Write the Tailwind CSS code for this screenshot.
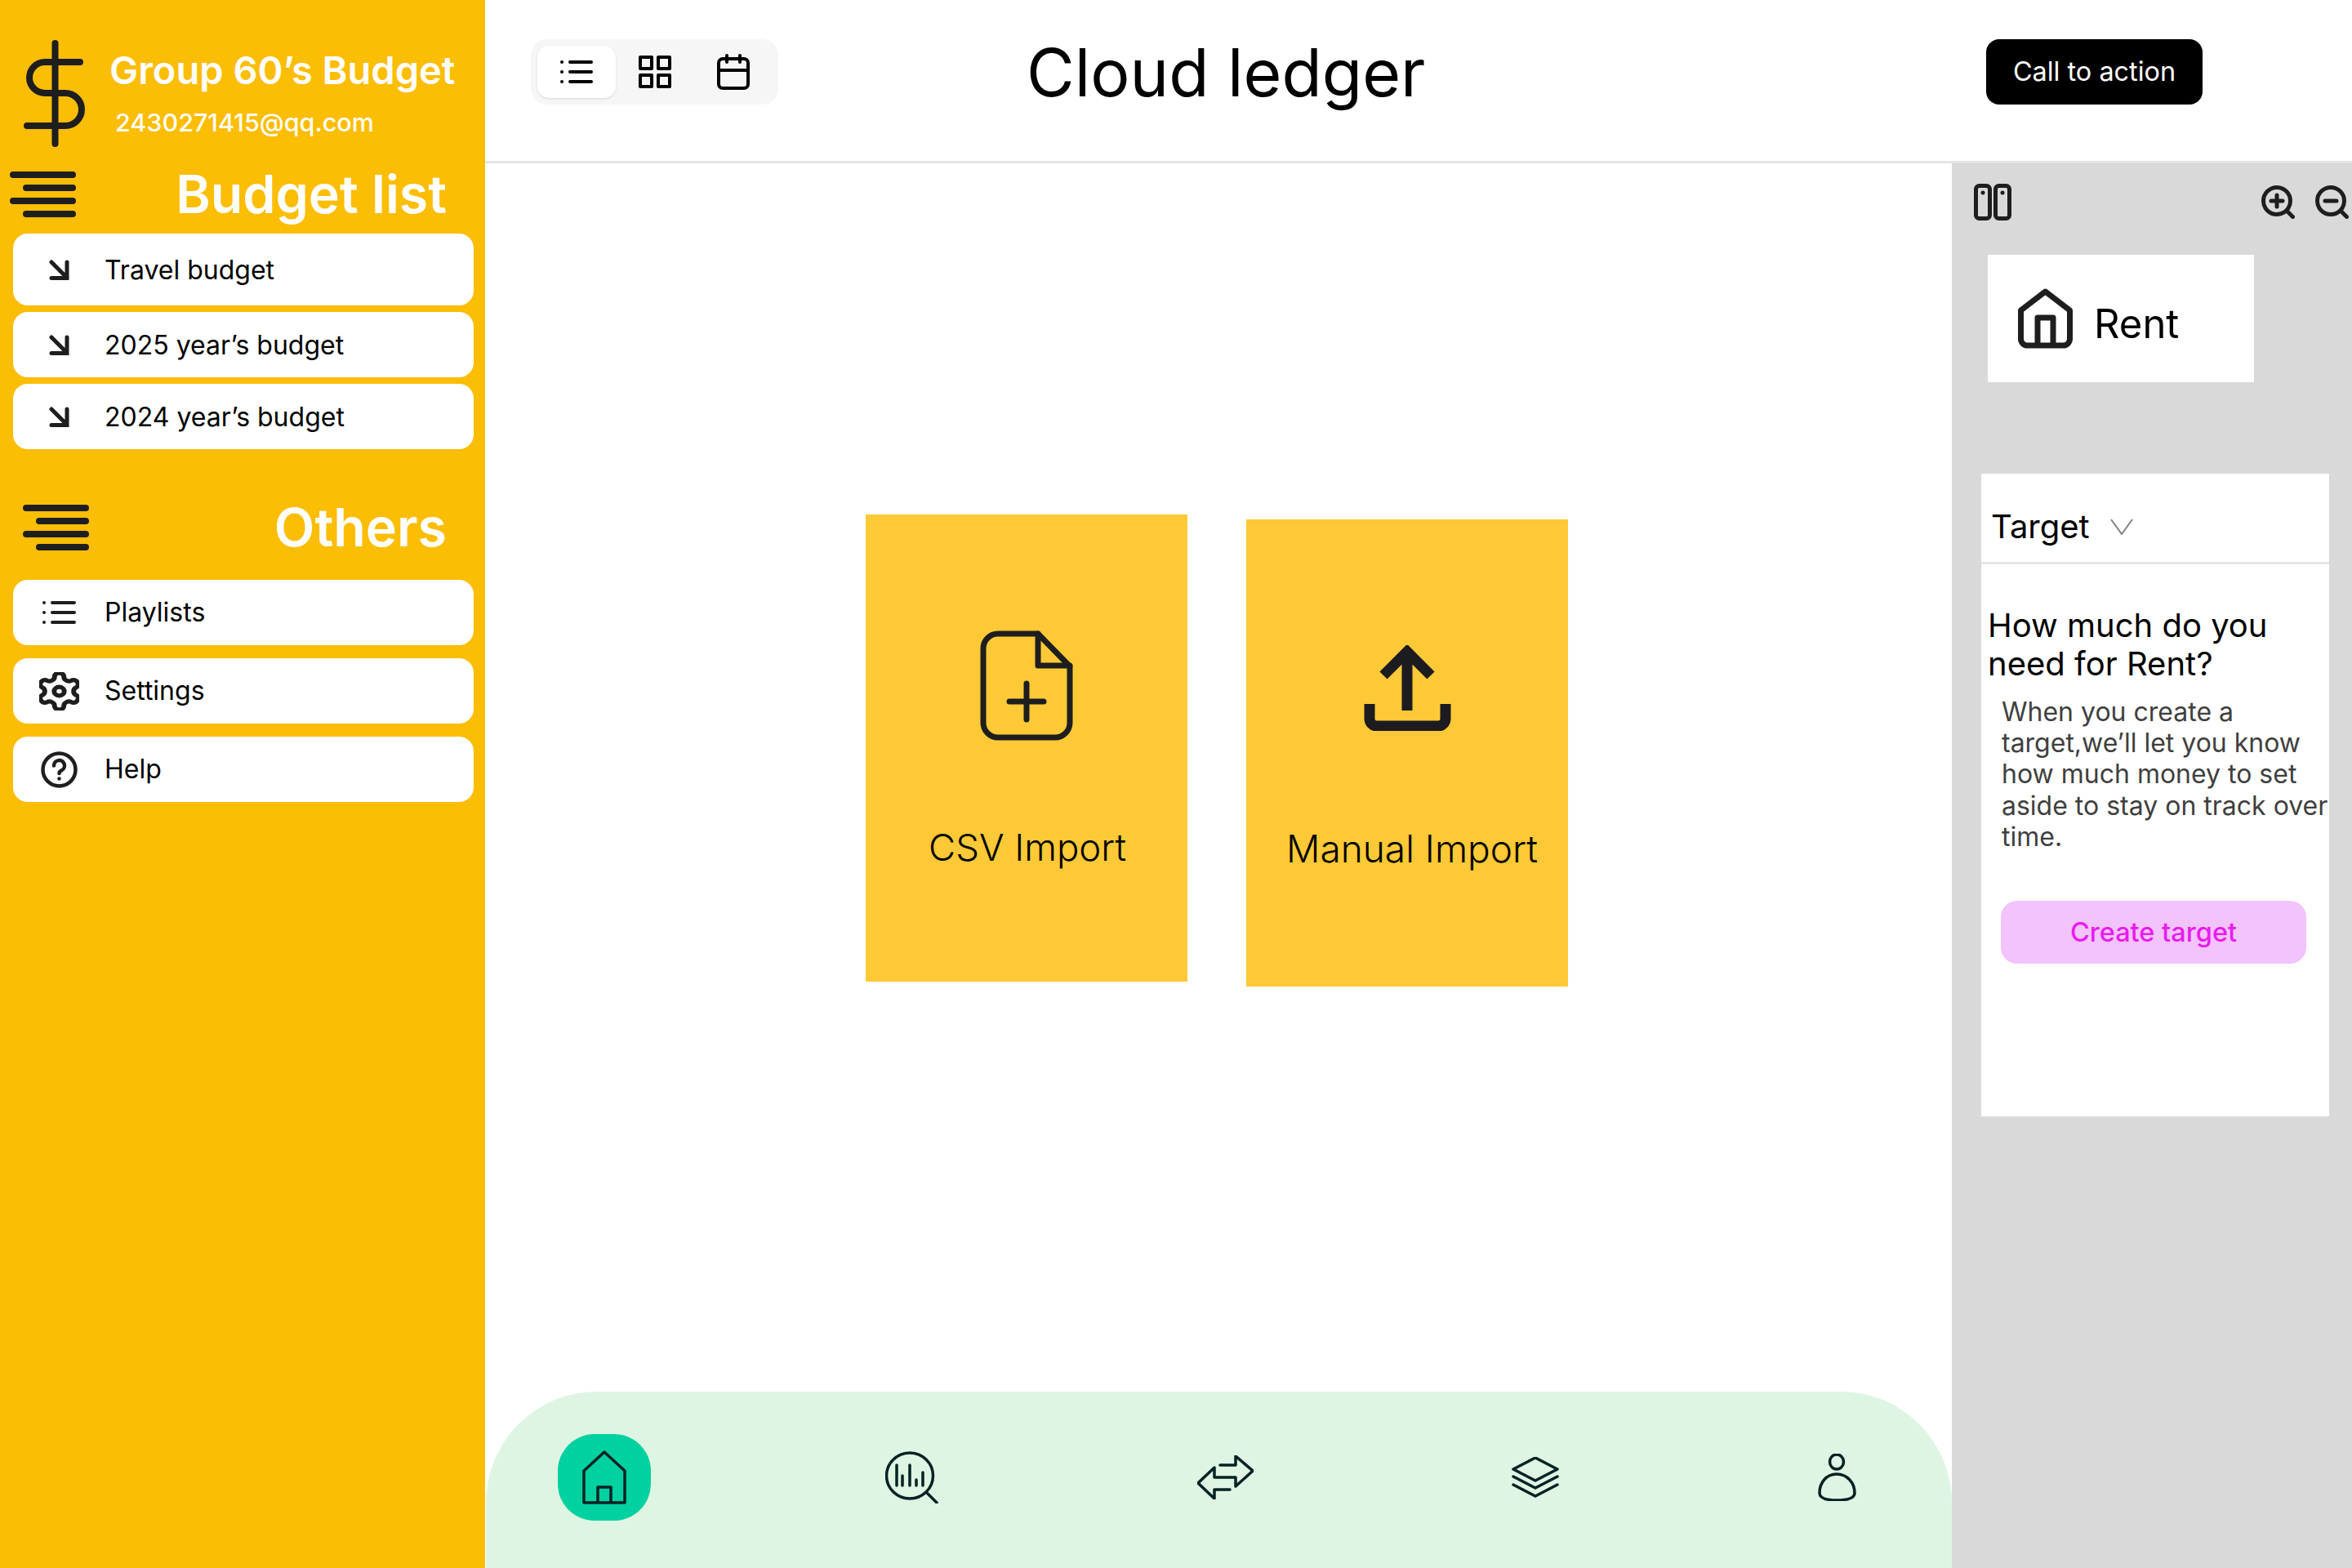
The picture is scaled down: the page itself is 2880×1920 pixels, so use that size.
<!DOCTYPE html>
<html lang="en">
<head>
  <meta charset="UTF-8" />
  <title>Cloud ledger</title>
  <script src="https://cdn.jsdelivr.net/npm/@tailwindcss/browser@4"></script>
</head>
<body class="w-[2880px] h-[1920px] overflow-hidden bg-white flex font-['Inter',sans-serif] text-black">

  <!-- Sidebar -->
  <aside class="w-[594px] h-full shrink-0 bg-[#fcbd05] flex flex-col">
    <div class="h-[197px] flex pl-[28px] pt-[49px]">
      <svg class="w-[78px] h-[131px] shrink-0" viewBox="28 49 78 131" fill="none" stroke="#1e1e1e" stroke-width="8" stroke-linecap="round"><path d="M67.5 53V176M98 76H55a19 19 0 0 0 0 38H80a20 20 0 0 1 0 40H33"/></svg>
      <div class="ml-[28px] mt-[5px]">
        <p class="text-[47px] leading-[64px] font-semibold text-white whitespace-nowrap">Group 60’s Budget</p>
        <p class="text-[30.5px] leading-[44px] font-medium text-white ml-[7px] mt-[10px]">2430271415@qq.com</p>
      </div>
    </div>

    <div class="h-[82px] flex items-center justify-between pl-[12px] pr-[47px]">
      <svg class="w-[81px] h-[56px]" viewBox="0 0 81 56" fill="none" stroke="#1e1e1e" stroke-width="8" stroke-linecap="round"><path d="M4 4H77M20 20H77M4 36H77M20 52H77"/></svg>
      <h2 class="text-[64.5px] leading-[82px] font-semibold text-white">Budget list</h2>
    </div>

    <div class="mt-[7px] ml-[16px] w-[564px] flex flex-col">
      <a class="h-[88px] pt-[1px] bg-white rounded-[18px] flex items-center text-[32px]">
        <span class="w-[112px] flex justify-center"><svg class="w-[25px] h-[25px]" viewBox="0 0 25 25" fill="none" stroke="#1e1e1e" stroke-width="5" stroke-linecap="round"><path d="M3 3L22 22M22 3V22.5H3"/></svg></span>
        Travel budget
      </a>
      <a class="h-[80px] mt-[8px] pt-[1px] bg-white rounded-[18px] flex items-center text-[32px]">
        <span class="w-[112px] flex justify-center"><svg class="w-[25px] h-[25px]" viewBox="0 0 25 25" fill="none" stroke="#1e1e1e" stroke-width="5" stroke-linecap="round"><path d="M3 3L22 22M22 3V22.5H3"/></svg></span>
        2025 year’s budget
      </a>
      <a class="h-[80px] mt-[8px] pt-[1px] bg-white rounded-[18px] flex items-center text-[32px]">
        <span class="w-[112px] flex justify-center"><svg class="w-[25px] h-[25px]" viewBox="0 0 25 25" fill="none" stroke="#1e1e1e" stroke-width="5" stroke-linecap="round"><path d="M3 3L22 22M22 3V22.5H3"/></svg></span>
        2024 year’s budget
      </a>
    </div>

    <div class="mt-[55px] h-[82px] flex items-center justify-between pl-[28px] pr-[47px]">
      <svg class="w-[81px] h-[56px]" viewBox="0 0 81 56" fill="none" stroke="#1e1e1e" stroke-width="8" stroke-linecap="round"><path d="M4 4H77M20 20H77M4 36H77M20 52H77"/></svg>
      <h2 class="text-[64.5px] leading-[82px] font-semibold text-white">Others</h2>
    </div>

    <div class="mt-[23px] ml-[16px] w-[564px] flex flex-col gap-[16px]">
      <a class="h-[80px] bg-white rounded-[18px] flex items-center text-[32px]">
        <span class="w-[112px] flex justify-center"><svg class="w-[41px] h-[28px]" viewBox="0 0 41 28" fill="none" stroke="#1e1e1e" stroke-width="4" stroke-linecap="round"><path d="M12 2H39M12 14H39M12 26H39"/><path d="M2 2h.01M2 14h.01M2 26h.01"/></svg></span>
        Playlists
      </a>
      <a class="h-[80px] bg-white rounded-[18px] flex items-center text-[32px]">
        <span class="w-[112px] flex justify-center"><svg class="w-[49px] h-[47px]" viewBox="2.5 1.5 19 21" preserveAspectRatio="none" fill="none" stroke="#1e1e1e" stroke-width="2.3" stroke-linecap="round" stroke-linejoin="round"><path d="M12.22 2h-.44a2 2 0 0 0-2 2v.18a2 2 0 0 1-1 1.73l-.43.25a2 2 0 0 1-2 0l-.15-.08a2 2 0 0 0-2.73.73l-.22.38a2 2 0 0 0 .73 2.73l.15.1a2 2 0 0 1 1 1.72v.51a2 2 0 0 1-1 1.74l-.15.09a2 2 0 0 0-.73 2.73l.22.38a2 2 0 0 0 2.73.73l.15-.08a2 2 0 0 1 2 0l.43.25a2 2 0 0 1 1 1.73V20a2 2 0 0 0 2 2h.44a2 2 0 0 0 2-2v-.18a2 2 0 0 1 1-1.73l.43-.25a2 2 0 0 1 2 0l.15.08a2 2 0 0 0 2.73-.73l.22-.39a2 2 0 0 0-.73-2.73l-.15-.08a2 2 0 0 1-1-1.74v-.5a2 2 0 0 1 1-1.74l.15-.09a2 2 0 0 0 .73-2.73l-.22-.38a2 2 0 0 0-2.73-.73l-.15.08a2 2 0 0 1-2 0l-.43-.25a2 2 0 0 1-1-1.73V4a2 2 0 0 0-2-2z"/><circle cx="12" cy="12" r="2.4"/></svg></span>
        Settings
      </a>
      <a class="h-[80px] bg-white rounded-[18px] flex items-center text-[32px]">
        <span class="w-[112px] flex justify-center"><svg class="w-[45px] h-[45px]" viewBox="0 0 45 45" fill="none" stroke="#1e1e1e" stroke-width="4.5" stroke-linecap="round"><circle cx="22.5" cy="22.5" r="20"/><path d="M16 17.5a6.5 6.5 0 1 1 9.5 5.8c-2 1-3 2-3 3.7"/><path d="M22.5 33.5h.01"/></svg></span>
        Help
      </a>
    </div>
  </aside>

  <div class="flex-1 flex flex-col min-w-0">
    <!-- Top bar -->
    <header class="h-[200px] shrink-0 bg-white border-b-[3px] border-[#e4e4e4] flex items-start pt-[48px]">
      <div class="ml-[56px] w-[303px] h-[80px] bg-[#f6f6f6] rounded-[20px] flex items-center pl-[8px]">
        <span class="w-[96px] h-[64px] bg-white rounded-[14px] shadow-sm flex items-center justify-center">
          <svg class="w-[40px] h-[30px]" viewBox="0 0 40 30" fill="none" stroke="#000" stroke-width="4" stroke-linecap="round"><path d="M12 3H38M12 15H38M12 27H38"/><path d="M2 3h.01M2 15h.01M2 27h.01"/></svg>
        </span>
        <svg class="w-[40px] h-[40px] ml-[28px]" viewBox="0 0 40 40" fill="none" stroke="#000" stroke-width="4" stroke-linejoin="round"><rect x="2" y="2" width="14" height="14"/><rect x="24" y="2" width="14" height="14"/><rect x="2" y="24" width="14" height="14"/><rect x="24" y="24" width="14" height="14"/></svg>
        <svg class="w-[40px] h-[44px] ml-[56px]" viewBox="0 0 40 44" fill="none" stroke="#000" stroke-width="4" stroke-linecap="round"><rect x="2" y="6" width="36" height="36" rx="5"/><path d="M2 20H38M12 2V10M28 2V10"/></svg>
      </div>
      <h1 class="ml-[304px] mt-[1px] text-[80.5px] leading-[80px] font-normal whitespace-nowrap">Cloud ledger</h1>
      <button class="ml-auto mr-[183px] w-[265px] h-[80px] bg-black rounded-[16px] text-white text-[32.4px]">Call to action</button>
    </header>

    <div class="flex-1 flex min-h-0">
      <!-- Centre -->
      <main class="w-[1796px] flex flex-col">
        <section class="flex-1 flex items-start pt-[430px] pl-[466px]">
          <div class="w-[394px] h-[572px] bg-[#fdc936] flex flex-col items-center pt-[142px]">
            <svg class="w-[114px] h-[135px]" viewBox="0 0 114 135" fill="none" stroke="#1e1e1e" stroke-width="7" stroke-linecap="round" stroke-linejoin="round"><path d="M71 4H22A18 18 0 0 0 4 22V113A18 18 0 0 0 22 131H92A18 18 0 0 0 110 113V44Z"/><path d="M71 4V43H110M57 65V109M36 87H78"/></svg>
            <p class="mt-[101px] pl-[2px] text-[45.5px] leading-[60px] font-light">CSV Import</p>
          </div>
          <div class="w-[394px] h-[572px] ml-[72px] mt-[6px] bg-[#fdc936] flex flex-col items-center pt-[154px]">
            <svg class="w-[107px] h-[105px]" viewBox="0 0 107 105" fill="none" stroke="#1c1b1f" stroke-width="13"><path d="M53 80V8M24 37L53 8L82 37"/><path d="M7 72V90A9 9 0 0 0 16 99H91A9 9 0 0 0 100 90V72"/></svg>
            <p class="mt-[114px] pl-[12px] text-[46px] leading-[60px] font-light whitespace-nowrap">Manual Import</p>
          </div>
        </section>

        <!-- Bottom nav -->
        <nav class="h-[216px] ml-[1px] bg-[#dff5e3] rounded-t-[136px] flex items-start pt-[52px] pl-[88px]">
          <a class="w-[114px] h-[106px] bg-[#00d1a0] rounded-[45px] flex items-center justify-center">
            <svg class="w-[54px] h-[66px]" viewBox="0 0 54 66" fill="none" stroke="#052224" stroke-width="3.5" stroke-linejoin="round"><path d="M27 2L2 25V64H52V25Z"/><path d="M19 64V45H35V64"/></svg>
          </a>
          <span class="h-[106px] ml-[287px] flex items-center">
            <svg class="w-[65px] h-[64px]" viewBox="0 0 65 64" fill="none" stroke="#052224" stroke-width="3.5" stroke-linecap="round"><ellipse cx="30" cy="30" rx="28.5" ry="28"/><path d="M51 51L63 63M14 17V42M21 30V42M30 17V42M38 35V42M46 26V42"/></svg>
          </span>
          <span class="h-[106px] ml-[317px] flex items-center">
            <svg class="w-[69px] h-[54px]" viewBox="0 0 69 54" fill="none" stroke="#052224" stroke-width="3.5" stroke-linecap="round" stroke-linejoin="round"><path d="M28 12H47V1L68 19L47 38V27H21V15L1 34L21 53V42H40"/></svg>
          </span>
          <span class="h-[106px] ml-[316px] flex items-center">
            <svg class="w-[58px] h-[50px]" viewBox="0 0 58 50" fill="none" stroke="#052224" stroke-width="3.5" stroke-linecap="round" stroke-linejoin="round"><path d="M29 1L56 15L29 29L2 15Z"/><path d="M2 24L29 38L56 24M2 34L29 48L56 34"/></svg>
          </span>
          <span class="h-[106px] ml-[317px] flex items-center">
            <svg class="w-[47px] h-[58px]" viewBox="0 0 47 58" fill="none" stroke="#052224" stroke-width="3.5"><ellipse cx="23" cy="10" rx="8.5" ry="9"/><path d="M23 25C10 25 2 36 2 48C2 55 12 57 23 57C34 57 45 55 45 48C45 36 36 25 23 25Z"/></svg>
          </span>
        </nav>
      </main>

      <!-- Right panel -->
      <aside class="flex-1 bg-[#d9d9d9] flex flex-col min-w-0">
        <div class="h-[112px] flex items-start pt-[25px] pl-[27px]">
          <svg class="w-[46px] h-[45px]" viewBox="0 0 46 45" fill="none" stroke="#1e1e1e" stroke-width="5"><rect x="2.5" y="2.5" width="17" height="40" rx="4"/><rect x="26.5" y="2.5" width="17" height="40" rx="4"/><path d="M11 11h.01M35 11h.01" stroke-linecap="round"/></svg>
          <svg class="w-[41px] h-[41px] ml-[306px] mt-[2px]" viewBox="0 0 41 41" fill="none" stroke="#1e1e1e" stroke-width="5" stroke-linecap="round"><circle cx="19" cy="19" r="16.5"/><path d="M31 31L38.5 38.5M19 12V26M12 19H26"/></svg>
          <svg class="w-[41px] h-[41px] ml-[25px] mt-[2px]" viewBox="0 0 41 41" fill="none" stroke="#1e1e1e" stroke-width="5" stroke-linecap="round"><circle cx="19" cy="19" r="16.5"/><path d="M31 31L38.5 38.5M12 19H26"/></svg>
        </div>
        <div class="ml-[44px] w-[326px] h-[156px] bg-white flex items-center pl-[37px]">
          <svg class="w-[67px] h-[74px]" viewBox="0 0 67 74" fill="none" stroke="#1e1e1e" stroke-width="7" stroke-linejoin="round"><path d="M33.5 4L3.5 27V62A8 8 0 0 0 11.5 70H55.5A8 8 0 0 0 63.5 62V27Z"/><path d="M24 70V36H43V70"/></svg>
          <span class="ml-[26px] mt-[14px] text-[49px]">Rent</span>
        </div>
        <div class="mt-[112px] ml-[36px] w-[426px] h-[787px] bg-white flex flex-col">
          <div class="h-[111px] border-b-[3px] border-[#e6e6e6] flex items-center pl-[12px] pt-[22px]">
            <span class="text-[40px] leading-[60px]">Target</span>
            <svg class="w-[28px] h-[20px] ml-[25px]" viewBox="0 0 28 20" fill="none" stroke="#808080" stroke-width="2"><path d="M1 1L14 19L27 1"/></svg>
          </div>
          <h3 class="mt-[51px] pl-[8px] text-[40px] leading-[47px] font-normal whitespace-nowrap">How much do you<br />need for Rent?</h3>
          <p class="mt-[17px] pl-[25px] text-[32px] leading-[38.2px] text-[#3f3f3f] whitespace-nowrap">When you create a<br />target,we’ll let you know<br />how much money to set<br />aside to stay on track over<br />time.</p>
          <button class="mt-[59px] pt-[2px] ml-[24px] w-[374px] h-[77px] bg-[#f3c3fd] rounded-[20px] text-[#e81cf0] text-[32.5px] font-medium">Create target</button>
        </div>
      </aside>
    </div>
  </div>

</body>
</html>
